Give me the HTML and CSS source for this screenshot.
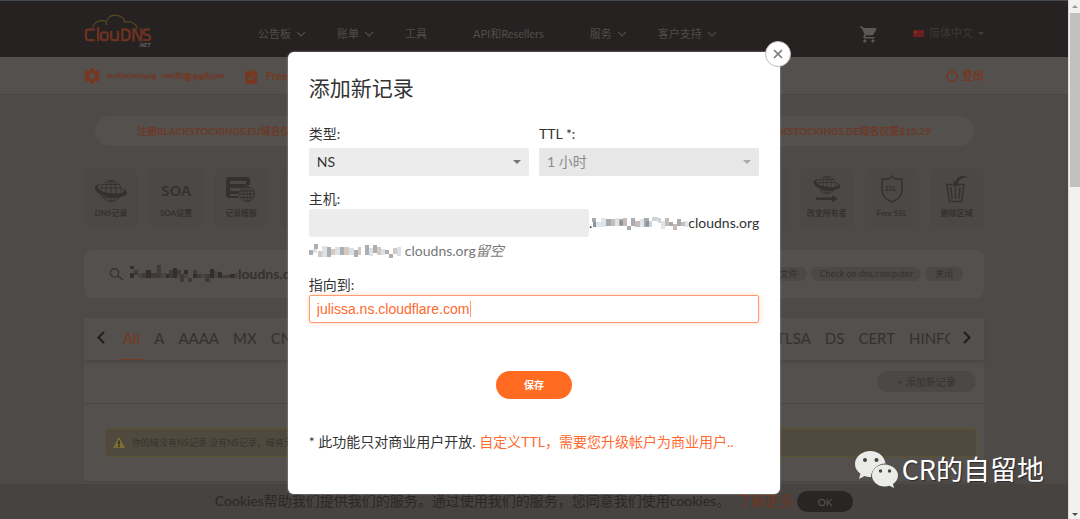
FILE: index.html
```html
<!DOCTYPE html>
<html lang="zh-CN">
<head>
<meta charset="utf-8">
<title>ClouDNS</title>
<link rel="stylesheet" href="styles.css">
</head>
<body>
<svg class="defs" aria-hidden="true">
  <symbol id="chev" viewBox="0 0 10 6"><path d="M1 1l4 4 4-4" fill="none" stroke="currentColor" stroke-width="1.1"/></symbol>
  <symbol id="globe" viewBox="0 0 34 24">
    <g fill="none" stroke="currentColor" stroke-width=".9">
      <circle cx="17" cy="12" r="10.5"/><ellipse cx="17" cy="12" rx="5" ry="10.5"/>
      <path d="M17 1.500v21M7 9h20M8 5.500h18M7 15h20M9 18.500h16"/>
    </g>
    <path d="M8 5C2 5 0 8 1 10.500c2 5 12 8.500 21 8 7-.3 11-2 11-5 0-1.500-2-3.500-6-5 3 2 3.500 3 3 4-1 2-6 3-12 2C10 13.500 4 11 4 8.500 4 7 5.500 6 8 5z" fill="currentColor"/>
  </symbol>
</svg>
<div class="screen">
  <div class="page">
    <header class="top">
      <div class="wrap top-row">
        <a class="logo" href="#" aria-label="ClouDNS">
          <svg viewBox="0 0 70 34" width="68" height="34">
            <g fill="none" stroke="#57461f" stroke-width="1.300"><path d="M9 14c2-6 8-8 14-6M23 12c-1-7 5-11 10-10 5 0 8 3 9 7M41 9c6-2 13 1 14 7"/></g>
            <g fill="none" stroke="#6a3220" stroke-width="2.400"><path d="M11 16.500H5q-3 0-3 3v5q0 3 3 3h6M14.500 14v14.700M20 19.500h2q2.500 0 2.500 2.500v3q0 2.500-2.500 2.500h-2q-2.500 0-2.500-2.500v-3q0-2.500 2.500-2.500M28 18v7q0 2.500 2.500 2.500H35V18M39.500 16.500h3q4.500 0 4.500 4v3q0 4-4.500 4h-3zM51 29V16.500h1.500l5 11H59V15M68 16.500h-4q-2.500 0-2.500 2.500t2.500 3h1.500q2.500 0 2.500 2.800t-2.500 2.700H61"/></g>
            <text x="56" y="34" class="logo-net">.NET</text>
          </svg>
        </a>
        <nav class="nav">
          <a href="#">公告板<svg><use href="#chev"/></svg></a>
          <a href="#">账单<svg><use href="#chev"/></svg></a>
          <a href="#">工具<svg></svg></a>
          <a href="#">API和Resellers<svg></svg></a>
          <a href="#">服务<svg><use href="#chev"/></svg></a>
          <a href="#">客户支持<svg><use href="#chev"/></svg></a>
        </nav>
        <a class="cart" href="#" aria-label="Cart"><svg viewBox="1 2 21 20" width="17" height="17"><path fill="#5c5857" d="M7 18a2 2 0 1 0 0 4 2 2 0 0 0 0-4zM1 2v2h2l3.600 7.600-1.400 2.400c-.7 1.300.3 3 1.800 3h12v-2H7.400l1.100-2h7.500c.7 0 1.400-.4 1.700-1l3.600-6.500A1 1 0 0 0 20.400 4H5.200L4.300 2zm16 16a2 2 0 1 0 0 4 2 2 0 0 0 0-4z"/></svg></a>
        <a class="lang" href="#"><svg viewBox="0 0 11 7" width="11" height="7"><path fill="#6d1f20" d="M0 0h11v7H0z"/><circle cx="2.500" cy="2.300" r="1.200" fill="#74401f"/></svg>简体中文<svg viewBox="0 0 6 3" width="6" height="3"><path fill="#413d3c" d="M0 0h6L3 3z"/></svg></a>
      </div>
    </header>
    <div class="account">
      <div class="wrap account-row">
        <svg viewBox="2 2 20 20" width="16" height="16"><path fill="#763820" fill-rule="evenodd" d="M9.500 2h5l.5 3 1.800 1 2.700-1.100 2.500 4.300-2.300 1.800v2l2.300 1.800-2.500 4.300-2.700-1.100-1.800 1-.5 3h-5L9 19l-1.800-1-2.700 1.100L2 14.800 4.300 13v-2L2 9.200l2.500-4.300L7.200 6 9 5zM12 8.500a3.500 3.500 0 1 0 0 7 3.500 3.500 0 0 0 0-7z"/></svg>
        <svg class="user" viewBox="0 0 118 12" width="118" height="12"><path fill="#653f33" d="M0 4h5v4H0zM9 3h4v5H9zM17 4h4v4h-4zM25 4h8v4h-8zM36 5h5v4h-5zM45 4h4v6h-4zM58 4h8v4h-8zM69 2h4v7h-4zM87 4h3v7h-3zM97 2h4v7h-4zM108 4h9v4h-9z"/><path fill="#5e463d" d="M5 5h4v3H5zM13 3h4v5h-4zM21 4h4v5h-4zM33 4h3v4h-3zM41 3h4v6h-4zM54 4h4v4h-4zM66 4h3v5h-3zM73 3h5v6h-5zM83 4h4v5h-4zM90 4h7v5h-7zM101 4h7v6h-7z"/><path fill="#713a26" d="M78 3h5v8h-5zM92 5h4v5h-4z"/></svg>
        <svg viewBox="0 0 12 16" width="12" height="16"><path fill="#763820" fill-rule="evenodd" d="M2 3h2a2 2 0 0 1 4 0h2q2 0 2 2v9q0 2-2 2H2q-2 0-2-2V5q0-2 2-2zM6 2a1 1 0 1 0 0 2 1 1 0 0 0 0-2z"/><path d="M3 9.500l2.200 2.200L9.500 7.500" fill="none" stroke="#54504e" stroke-width="1.500"/></svg>
        <a href="#">Free</a>
        <a class="logout" href="#"><svg viewBox="0 0 12 13" width="12" height="13"><path d="M4 2.500a5 5 0 1 0 4 0M6 0v6" fill="none" stroke="#763820" stroke-width="1.500"/></svg>登出</a>
      </div>
    </div>
    <main class="wrap">
      <div class="promo"><a href="#">注册BLACKSTOCKINGS.EU域名仅</a><a href="#">注册BLACKSTOCKINGS.DE域名仅需$10.29</a></div>
      <div class="tiles">
        <a class="tile" href="#"><svg width="34" height="24"><use href="#globe"/></svg>DNS记录</a>
        <a class="tile" href="#"><b>SOA</b>SOA设置</a>
        <a class="tile" href="#"><svg viewBox="0 0 30 26" width="30" height="26"><path fill="currentColor" fill-rule="evenodd" d="M3 0h18q3 0 3 3v5q-5 0-8 3H4v3h9l-1 3H4v2h8l1 2H3q-3 0-3-3V3q0-3 3-3zM4 4v3h16V4z"/><g fill="none" stroke="currentColor"><circle cx="21" cy="17" r="7.500"/><ellipse cx="21" cy="17" rx="3.500" ry="7.500"/><path d="M21 9.500v15M14 14h14M13.500 17h15M14 20.500h14"/></g></svg>记录模板</a>
        <span class="tile"></span><span class="tile"></span><span class="tile"></span><span class="tile"></span><span class="tile"></span><span class="tile"></span><span class="tile"></span><span class="tile"></span>
        <a class="tile" href="#"><svg viewBox="0 0 28 28" width="28" height="28"><svg width="28" height="20"><use href="#globe"/></svg><path fill="currentColor" d="M3 22.500h16V20l6 3.800-6 3.700V25H3z"/></svg>改变所有者</a>
        <a class="tile" href="#"><svg viewBox="0 0 22 28" width="22" height="28"><path d="M11 1l3 3h7v11q0 8-10 12Q1 23 1 15V4h7z" fill="none" stroke="currentColor" stroke-width="1.500"/><text x="4" y="16" class="ssl">SSL</text></svg>Free SSL</a>
        <a class="tile" href="#"><svg viewBox="0 0 24 28" width="24" height="28"><path d="M1 9.500h7M13 9.500h7M2 9.500l2.500 17h12l2.500-17M6 12l1 12M10.500 13v11M15 12l-1 12" fill="none" stroke="currentColor" stroke-width="1.400"/><path fill="currentColor" d="M23 3c-6-1-9 1-10.500 6l3 .5L9 12 8 5l2 2c3-7 9-8 13-4z"/></svg>删除区域</a>
      </div>
      <div class="zone">
        <svg viewBox="0 0 15 12" width="15" height="12"><circle cx="5.500" cy="4.800" r="4.200" fill="none" stroke="#332f2e" stroke-width="1.200"/><path d="M8.500 7.700l5.500 4" stroke="#332f2e" stroke-width="1.200"/></svg>
        <span class="zone-name"><svg viewBox="0 0 108 17" width="108" height="17"><path fill="#332f2e" d="M0 8h4v5H0zM0 1h4v3H0zM16 5h5v8h-5zM36 9h4v4h-4zM43 3h4v10h-4zM54 5h4v4h-4zM63 9h4v4h-4zM80 4h4v9h-4zM88 7h4v6h-4zM100 9h5v4h-5z"/><path fill="#403b3a" d="M4 5h4v5H4zM12 8h4v5h-4zM21 8h6v5h-6zM27 0h4v13h-4zM39 5h4v8h-4zM47 5h4v4h-4zM50 9h4v8h-4zM58 13h4v4h-4zM63 5h4v4h-4zM67 9h4v4h-4zM75 9h5v8h-5zM92 10h8v3h-8z"/><path fill="#4a4543" d="M8 8h4v5H8zM31 8h5v5h-5zM47 9h3v4h-3zM54 9h4v4h-4zM71 9h4v4h-4zM84 6h4v7h-4zM105 8h3v5h-3z"/></svg>loudns.org</span>
        <div class="zone-actions"><button>区域文件</button><button class="wide">Check on dns.computer</button><button>关闭</button></div>
      </div>
      <section class="records">
        <nav class="tabs">
          <button class="arrow" aria-label="Previous"><svg viewBox="0 0 8 13" width="8" height="13"><path d="M7 1L1.500 6.500 7 12" fill="none" stroke="currentColor" stroke-width="2.200"/></svg></button>
          <div class="tab-list"><a class="on" href="#">All</a><a href="#">A</a><a href="#">AAAA</a><a href="#">MX</a><a href="#">CNAME</a></div>
          <div class="tab-list end"><a href="#">TLSA</a><a href="#">DS</a><a href="#">CERT</a><a class="cut" href="#">HINFO</a></div>
          <button class="arrow" aria-label="Next"><svg viewBox="0 0 8 13" width="8" height="13"><path d="M1 1l5.500 5.500L1 12" fill="none" stroke="currentColor" stroke-width="2.200"/></svg></button>
        </nav>
        <div class="toolbar"><button>+ 添加新记录</button></div>
        <div class="notice-row"><div class="notice"><svg viewBox="0 0 12 11" width="12" height="11"><path fill="#787032" d="M6 0l6 11H0z"/><path d="M6 3.500v4M6 8.500V10" stroke="#292524" stroke-width="1.500"/></svg>你的域没有NS记录.没有NS记录，域将无</div></div>
      </section>
    </main>
    <div class="cookies"><span>Cookies帮助我们提供我们的服务。通过使用我们的服务，您同意我们使用cookies。</span><a href="#">了解更多</a><button>OK</button></div>
    <div class="backdrop">
      <form class="dialog" role="dialog" aria-labelledby="dlg-title">
        <button type="button" class="close" aria-label="Close"><svg viewBox="0 0 10 10" width="10" height="10"><path d="M1 1l8 8M9 1L1 9" stroke="#7b7b7b" stroke-width="1.700"/></svg></button>
        <h1 id="dlg-title">添加新记录</h1>
        <div class="cols">
          <div class="field"><label for="type">类型:</label><div class="pick"><select id="type"><option>NS</option></select></div></div>
          <div class="field"><label for="ttl">TTL *:</label><div class="pick off"><select id="ttl" disabled><option>1 小时</option></select></div></div>
        </div>
        <label for="host">主机:</label>
        <div class="host"><input id="host" type="text"><span class="suffix">.<svg viewBox="0 0 96 14" width="96" height="14"><path fill="#a9aaac" d="M0 2h4v4H0zM14 3h5v7h-5zM27 3h4v7h-4zM35 10h4v4h-4zM39 2h4v8h-4zM52 2h5v9h-5zM77 6h4v4h-4zM85 3h4v7h-4z"/><path fill="#dfe5eb" d="M4 6h5v5H4zM9 2h5v9H9zM23 2h4v8h-4zM48 3h4v8h-4zM69 5h4v8h-4zM92 5h4v6h-4z"/><path fill="#cbd6df" d="M57 5h3v6h-3zM60 1h6v4h-6zM66 2h3v5h-3z"/><path fill="#c6bcb7" d="M19 3h4v7h-4zM31 2h4v8h-4zM43 5h5v6h-5zM73 2h4v8h-4zM81 8h4v6h-4zM89 6h4v4h-4z"/><path fill="#8d9198" d="M1 6h3v5H1zM28 5h3v4h-3zM54 5h3v5h-3z"/></svg>cloudns.org</span></div>
        <p class="hint"><svg viewBox="0 0 96 14" width="96" height="14"><path fill="#abafb3" d="M0 6h4v5H0zM5 0h4v5H5zM18 3h4v10h-4zM31 3h4v8h-4zM45 6h4v7h-4zM56 1h4v10h-4zM64 1h4v8h-4zM76 6h4v4h-4zM80 10h4v4h-4z"/><path fill="#dce1e7" d="M4 5h4v4H4zM13 2h5v11h-5zM26 3h5v8h-5zM40 4h5v7h-5zM60 4h4v8h-4zM72 5h4v6h-4zM88 3h4v9h-4z"/><path fill="#d6c9bf" d="M9 7h4v6H9zM22 5h4v6h-4zM35 3h5v8h-5zM49 3h3v8h-3zM68 3h4v8h-4zM84 4h4v6h-4z"/></svg>cloudns.org<i>留空</i></p>
        <label for="target">指向到:</label>
        <div class="target"><input id="target" type="text" value="julissa.ns.cloudflare.com"><span class="caret"></span></div>
        <button type="button" class="save">保存</button>
        <p class="note">* 此功能只对商业用户开放. <a href="#">自定义TTL，需要您升级帐户为商业用户..</a></p>
      </form>
    </div>
    <div class="watermark"><svg viewBox="0 0 43 37" width="43" height="37"><path fill="#ebebea" d="M15.500 0C7 0 0 5.700 0 13c0 4 2 7.500 5.500 9.800L4 28l5.500-3c2 .7 4 1 6.500 1 .3-8 7-13.500 14.500-13.500C29.500 5 23 0 15.500 0z"/><path fill="#ebebea" d="M29.500 13.500C22 13.500 17 18.500 17 24.500s5.500 11 12.500 11c2 0 3.500-.3 5-.8L39 37l-1-4c3-2 5-5 5-8.500 0-6-6-11-13.500-11z"/><g fill="#464241"><circle cx="10" cy="9" r="2"/><circle cx="21.500" cy="9" r="2"/><circle cx="25.500" cy="20" r="1.700"/><circle cx="34.500" cy="20" r="1.700"/></g></svg><span>CR的自留地</span></div>
  </div>
  <div class="scrollbar"><i class="up"></i><div class="thumb"></div><i class="down"></i></div>
</div>
</body>
</html>
```
FILE: styles.css
```css
* { box-sizing: border-box; }
html, body { height: 100%; }
body {
  margin: 0;
  overflow: hidden;
  background: #4e4a48;
  color: #353130;
  font: 14px/20px Lato, "Noto Sans CJK SC", sans-serif;
}
a { color: inherit; text-decoration: none; }
button, input, select { font: inherit; color: inherit; border: 0; margin: 0; }
button { padding: 0; white-space: nowrap; }
svg { flex: none; }
.defs { position: absolute; width: 0; height: 0; }

.screen { display: flex; height: 100vh; }
.page { position: relative; flex: 1; min-width: 0; overflow: hidden; border-top: 1px solid #454a52; }
.wrap { max-width: 900px; margin: 0 auto; }

.top { background: #262221; height: 56px; }
.top-row { display: flex; align-items: center; height: 100%; padding-top: 10px; }
.logo { display: flex; padding-bottom: 8px; }
.logo-net { font: italic 700 6px Roboto, sans-serif; fill: #625e5d; }
.nav { display: flex; gap: 31px; margin-left: 106px; font-size: 11px; color: #514d4c; white-space: nowrap; }
.nav a { display: flex; align-items: center; }
.nav svg { width: 10px; height: 6px; margin-left: 5px; }
.cart { display: flex; margin-left: auto; }
.lang { display: flex; align-items: center; gap: 5px; margin-left: 36px; padding-bottom: 2px; font-size: 11px; color: #3d3938; }

.account { background: #54504e; color: #763820; border-bottom: 1px solid #4a4644; font-weight: 700; font-size: 11px; }
.account-row { display: flex; align-items: center; height: 37px; }
.user { margin: 0 20px 0 7px; }
.account a { margin-left: 9px; }
.account .logout { display: flex; align-items: center; gap: 4px; margin-left: auto; }

.promo {
  display: flex; align-items: center; justify-content: space-between;
  height: 30px; margin: 21px 10px 0 11px; padding: 0 43px 0 42px;
  border-radius: 15px; background: #53504e; color: #6d3926;
  font-size: 10px; font-weight: 700;
}
.tiles { display: flex; justify-content: space-between; margin-top: 21px; }
.tile {
  display: flex; flex-direction: column; align-items: center; justify-content: flex-end;
  width: 54px; height: 62px; padding-bottom: 10px; border-radius: 10px;
  background: #4c4846; color: #353130;
  font-size: 8px; line-height: 12px; font-weight: 700; white-space: nowrap;
}
.tile svg { margin-bottom: 4px; }
.tile b { font: 600 15px/20px "Noto Sans", sans-serif; margin-bottom: 7px; }
.ssl { font: 700 7px "Noto Sans", sans-serif; fill: currentColor; }

.zone {
  display: flex; align-items: center; height: 48px; margin-top: 21px;
  padding: 0 21px 0 25px; border-radius: 8px; background: #53504e;
}
.zone-name { display: flex; align-items: center; margin-left: 6px; font-weight: 700; }
.zone-name svg { margin-bottom: 2px; }
.zone-actions { display: flex; gap: 4px; margin-left: auto; }
.zone-actions button { height: 14px; padding: 0 10px; border-radius: 7px; background: #4c4846; font-size: 9px; line-height: 14px; }
.zone-actions .wide { padding: 0 8px; }

.records { margin-top: 20px; background: #53504e; }
.tabs {
  display: flex; align-items: center; height: 42px; padding: 0 13px;
  box-shadow: 0 2px 4px #494543; font-size: 15px;
}
.arrow { display: flex; padding-bottom: 3px; background: none; color: #231f1e; }
.tab-list { display: flex; gap: 14px; margin-left: 18px; }
.tab-list a { line-height: 39px; padding-bottom: 2px; }
.tab-list .on { position: relative; color: #763820; }
.tab-list .on::after { content: ""; position: absolute; left: -4px; right: -4px; bottom: 0; height: 1px; background: #763820; }
.tab-list.end { margin: 0 13px 0 auto; }
.cut { width: 41px; overflow: hidden; }
.toolbar { display: flex; justify-content: flex-end; height: 44px; padding: 11px 8px 0; border-bottom: 1px solid #4b4745; }
.toolbar button { width: 99px; height: 21px; border-radius: 11px; background: #4c4846; font-size: 10px; }
.notice-row { padding: 24px 7px 24px 21px; border-bottom: 1px solid #4b4745; }
.notice {
  display: flex; align-items: center; gap: 7px; height: 29px; padding: 0 7px;
  border: 1px solid #58522e; border-radius: 5px; background: #504a3e; font-size: 9px;
}

.cookies {
  position: absolute; left: 0; right: 0; bottom: 0; height: 35px;
  display: flex; align-items: center; justify-content: center; white-space: nowrap;
  background: #474341; color: #2b2726;
}
.cookies span, .cookies a { padding-bottom: 2px; }
.cookies a { color: #6f3723; margin: 0 4px 0 7px; }
.cookies button { width: 56px; height: 21px; border-radius: 11px; background: #292524; color: #5e5a58; font-size: 10px; }

.backdrop { position: absolute; inset: 0; padding-top: 51px; }
.dialog {
  position: relative; width: 46.1%; min-width: 492px; margin: 0 auto; padding: 24px 21px 42px;
  border-radius: 6px; background: #fff; color: #333;
  box-shadow: 0 0 2px #b7b3b2;
}
.close {
  position: absolute; top: -11px; right: -11px; width: 26px; height: 26px;
  display: flex; align-items: center; justify-content: center;
  border: 1px solid #c2bdbb; border-radius: 50%; background: #fff;
}
.dialog h1 { margin: 0 0 24px; font-size: 21px; line-height: 24px; font-weight: 400; }
.dialog label { display: block; }
.cols { display: flex; gap: 10px; margin-bottom: 13px; }
.field { flex: 1; }
.pick { position: relative; margin-top: 4px; }
.pick::after {
  content: ""; position: absolute; right: 8px; top: 12px;
  border: 4px solid transparent; border-top-color: #777; border-bottom: 0;
}
.pick.off::after { border-top-color: #aaa; }
.pick select {
  display: block; width: 100%; height: 28px; padding: 0 8px;
  appearance: none; border-radius: 2px; background: #ececec; opacity: 1;
}
.pick.off select { background: #e7e7e7; color: #8c8c8c; }
.host { display: flex; align-items: center; }
.host input { flex: 1; min-width: 0; height: 28px; padding: 0 8px; border-radius: 3px; background: #ececec; }
.suffix { display: flex; align-items: center; }
.hint { display: flex; align-items: center; margin: 4px 0 14px; color: #777; }
.target { position: relative; }
.target input {
  display: block; width: 100%; height: 28px; padding: 0 7px;
  border: 1px solid #ff9a70; border-radius: 2px; background: #fff; color: #ff6a30;
  box-shadow: 0 0 5px #ffd2be; font-family: "Liberation Sans", sans-serif; outline: 0;
}
.caret { position: absolute; left: 161px; top: 6px; width: 1px; height: 16px; background: #ff9a70; }
.save {
  display: block; width: 76px; height: 28px; margin: 48px auto 33px;
  border-radius: 14px; background: #ff6b21; color: #fff; font-size: 10px; font-weight: 700;
}
.note { margin: 0; white-space: nowrap; }
.note a { color: #ff6a30; }

.watermark {
  position: absolute; right: 24px; bottom: 30px; display: flex; align-items: center; gap: 4px;
  color: #fff; font: 27px/40px "Noto Sans CJK SC", sans-serif;
  text-shadow: 1px 1px 1px #2d2928;
}

.scrollbar {
  display: flex; flex-direction: column; align-items: center;
  width: 12px; padding: 5px 0 3px; background: #f1f1f1; border-left: 1px solid #dcdcdc;
}
.scrollbar .up { border: 3px solid transparent; border-top: 0; border-bottom-color: #999; }
.scrollbar .thumb { width: 10px; height: 34%; margin-top: 5px; background: #c1c1c1; }
.scrollbar .down { margin-top: auto; border: 3px solid transparent; border-bottom: 0; border-top-color: #505050; }
```
